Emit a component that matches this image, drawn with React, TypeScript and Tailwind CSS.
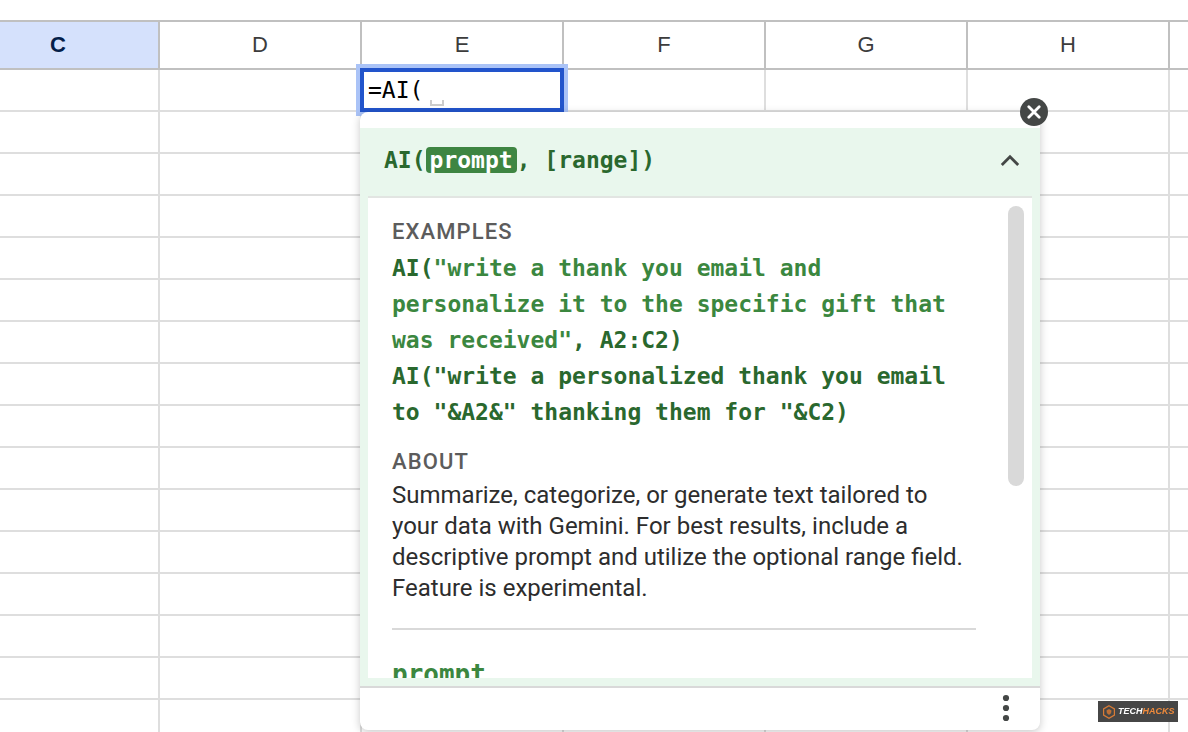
import React from 'react';

const columns = ['C', 'D', 'E', 'F', 'G', 'H', 'I'];
const rows = Array.from({ length: 16 }, (_, i) => i + 1);

function CloseButton() {
  return (
    <button
      type="button"
      aria-label="Close"
      className="absolute -top-3.5 -right-2 flex size-7 items-center justify-center rounded-full bg-[#444746]"
    >
      <svg width="14" height="14" viewBox="0 0 14 14" fill="none" stroke="white" strokeWidth="2.8" strokeLinecap="round">
        <path d="M1.8 1.8 12.2 12.2M12.2 1.8 1.8 12.2" />
      </svg>
    </button>
  );
}

function FormulaHelp() {
  return (
    <section className="absolute top-[42px] -left-0.5 z-20 w-[680px] rounded-lg bg-white pt-4 text-left shadow-[0_2px_8px_rgba(0,0,0,0.22)]">
      <CloseButton />

      <div className="bg-[#e9f7ed] px-2 pb-2">
        <header className="flex h-[70px] items-center justify-between border-b-2 border-[#e2e5e2] pr-3 pb-1 pl-4">
          <h1 className="font-['DejaVu_Sans_Mono',monospace] text-[23px] leading-9 font-bold text-[#2a682e]">
            AI(
            <span className="rounded bg-[#3e8542] px-1 text-white">prompt</span>
            , [range])
          </h1>
          <button type="button" aria-label="Collapse" className="flex h-6 w-5 items-center justify-center">
            <svg width="20" height="18" viewBox="0 0 20 18" fill="none" stroke="#444746" strokeWidth="2.8">
              <path d="M1.8 14 10 5.8 18.2 14" />
            </svg>
          </button>
        </header>

        <div className="flex h-[480px] gap-8 overflow-hidden bg-white pr-2 pl-6">
          <div className="flex-1 pt-5">
            <h2 className="font-[Roboto,sans-serif] text-[22px] leading-7 font-medium tracking-wider text-[#5c5c5c]">EXAMPLES</h2>
            <div className="mt-1 font-['DejaVu_Sans_Mono',monospace] text-[23px] leading-9 font-bold text-[#2a682e]">
              <p>
                AI(<span className="text-[#3b873f]">"write a thank you email and personalize it to the specific gift that was received"</span>, A2:C2)
              </p>
              <p>AI("write a personalized thank you email to "&amp;A2&amp;" thanking them for "&amp;C2)</p>
            </div>

            <h2 className="mt-[18px] font-[Roboto,sans-serif] text-[22px] leading-7 font-medium tracking-wider text-[#5c5c5c]">ABOUT</h2>
            <p className="mt-1 font-[Roboto,sans-serif] text-2xl leading-[31px] text-[#2d2d2d]">
              Summarize, categorize, or generate text tailored to your data with Gemini. For best results, include a
              descriptive prompt and utilize the optional range field. Feature is experimental.
            </p>

            <hr className="mt-6 border-t-2 border-[#d9d9d9]" />
            <h2 className="mt-6 font-['DejaVu_Sans_Mono',monospace] text-[26px] leading-10 font-bold text-[#3b873f]">prompt</h2>
          </div>
          <div className="mt-2 h-[280px] w-4 rounded-full bg-[#d9d9d9]" />
        </div>
      </div>

      <footer className="flex h-11 items-center justify-end border-t-2 border-[#d9d9d9] pr-6 pb-0.5">
        <button type="button" aria-label="More options" className="flex h-8 w-5 items-center justify-center">
          <svg width="8" height="28" viewBox="0 0 8 28" fill="#444746">
            <circle cx="4" cy="4" r="3.1" />
            <circle cx="4" cy="14" r="3.1" />
            <circle cx="4" cy="24" r="3.1" />
          </svg>
        </button>
      </footer>
    </section>
  );
}

function ActiveCell() {
  return (
    <td className="relative border-r-2 border-b-2 border-[#dedede] p-0">
      <input
        aria-label="E1"
        defaultValue="=AI("
        className="absolute -inset-0.5 z-10 h-11 w-[204px] border-4 border-[#2254cb] bg-white px-1 font-['DejaVu_Sans_Mono',monospace] text-[23px] text-black ring-4 ring-[#aac3f7] outline-none"
      />
      <span className="absolute bottom-1 left-[68px] z-10 h-1.5 w-3.5 border-2 border-t-0 border-[#cccccc]" />
      <FormulaHelp />
    </td>
  );
}

function Watermark() {
  return (
    <div className="fixed right-2.5 bottom-2.5 z-30 flex h-[21px] w-20 items-center gap-0.5 bg-[#3c3c3c]/95 pl-1">
      <svg width="14" height="14" viewBox="0 0 14 14" fill="none" stroke="#d97b35" strokeWidth="1.2">
        <path d="M7 .8 12.4 3.9v6.2L7 13.2 1.6 10.1V3.9Z" />
        <path d="M7 4.4 9.2 5.6 8.7 8.2 7 9.6 5.3 8.2 4.8 5.6Z" fill="#d97b35" fillOpacity=".8" strokeWidth=".5" />
      </svg>
      <span className="font-['Liberation_Sans',sans-serif] text-[9px] font-bold text-white italic">
        TECH<span className="text-[#ee8a3c]">HACKS</span>
      </span>
    </div>
  );
}

export default function App() {
  return (
    <main className="h-screen overflow-hidden bg-white pt-5">
      <table className="-ml-[42px] w-[1414px] table-fixed border-separate border-spacing-0">
        <thead>
          <tr className="h-[50px]">
            {columns.map((name) => (
              <th
                key={name}
                scope="col"
                className={`border-y-2 border-r-2 border-[#c0c0c0] p-0 font-['Liberation_Sans',sans-serif] text-[22px] leading-7 ${
                  name === 'C' ? 'bg-[#d5e1fc] font-bold text-[#041e49]' : 'font-normal text-[#3c3c3c]'
                }`}
              >
                {name}
              </th>
            ))}
          </tr>
        </thead>
        <tbody>
          {rows.map((row) => (
            <tr key={row} className="h-[42px]">
              {columns.map((name) =>
                name === 'E' && row === 1 ? (
                  <ActiveCell key={name} />
                ) : (
                  <td key={name} className="border-r-2 border-b-2 border-[#dedede] p-0" />
                )
              )}
            </tr>
          ))}
        </tbody>
      </table>
      <Watermark />
    </main>
  );
}
